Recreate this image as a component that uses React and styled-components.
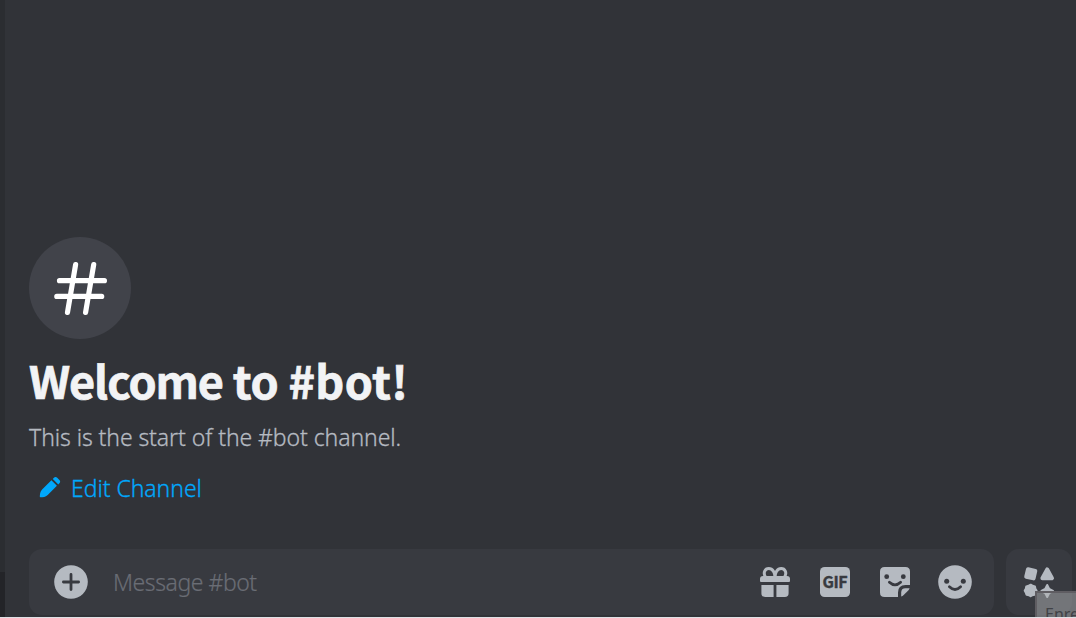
import React from "react";
import styled, { createGlobalStyle } from "styled-components";

const Global = createGlobalStyle`
  * { box-sizing: border-box; }
  html, body { margin: 0; padding: 0; background: #313338; overflow: hidden; }
  body { font-family: "Noto Sans", "Open Sans", sans-serif; }
`;

const Screen = styled.div`
  position: relative;
  display: flex;
  width: 1076px;
  height: 618px;
  overflow: hidden;
  background: #313338;
  border-bottom: 1px solid #dfe0e5;
`;

const Rail = styled.div`
  display: flex;
  flex: 0 0 5px;
  flex-direction: column;
  background: #2b2d31;
`;

const RailFooter = styled.div`
  margin-top: auto;
  height: 45px;
  background: #232428;
`;

const Chat = styled.main`
  display: flex;
  flex: 1;
  flex-direction: column;
  justify-content: flex-end;
  padding: 0 4px 2px 24px;
  min-width: 0;
`;

const Welcome = styled.section`
  display: flex;
  flex-direction: column;
  align-items: flex-start;
  margin-bottom: 45px;
`;

const ChannelIcon = styled.div`
  width: 102px;
  height: 102px;
  border-radius: 50%;
  background: #41434a;
  svg { display: block; }
`;

const Title = styled.h1`
  margin: 11px 0 0;
  font-family: "Noto Sans CJK JP", "Noto Sans", sans-serif;
  font-size: 45px;
  line-height: 60px;
  font-weight: 700;
  letter-spacing: -0.3px;
  -webkit-text-stroke: 0.7px #f2f3f5;
  white-space: nowrap;
  color: #f2f3f5;
`;

const Word = styled.span`
  letter-spacing: ${({ $tracking }) => $tracking}px;
`;

const Subtitle = styled.p`
  margin: 12px 0 0;
  font-size: 23px;
  line-height: 30px;
  font-weight: 300;
  letter-spacing: -0.08px;
  -webkit-text-stroke: 0.3px currentColor;
  white-space: nowrap;
  color: #b5bac1;
`;

const EditButton = styled.button`
  display: flex;
  align-items: center;
  margin: 18px 0 0;
  padding: 0 0 0 9px;
  height: 34px;
  border: 0;
  background: none;
  font: 300 23px/34px "Noto Sans", "Open Sans", sans-serif;
  letter-spacing: -0.05px;
  -webkit-text-stroke: 0.3px currentColor;
  color: #00a8fc;
  gap: 9px;
  white-space: nowrap;
`;

const EditLabel = styled.span`
  padding-top: 2px;
`;

const Composer = styled.div`
  display: flex;
  gap: 12px;
`;

const InputBar = styled.div`
  display: flex;
  align-items: center;
  width: 965px;
  height: 66px;
  padding: 0 21px 0 24px;
  border-radius: 13px;
  background: #383a40;
`;

const Placeholder = styled.span`
  flex: 1;
  margin: 0 0 1px 24px;
  font-size: 23px;
  line-height: 32px;
  font-weight: 300;
  letter-spacing: -0.45px;
  -webkit-text-stroke: 0.2px currentColor;
  color: #6a6d75;
`;

const Actions = styled.div`
  display: flex;
  gap: 24px;
`;

const Apps = styled.div`
  display: grid;
  place-items: center;
  width: 66px;
  height: 66px;
  border-radius: 13px;
  background: #383a40;
`;

const Glyph = styled.svg`
  display: block;
  flex: none;
  width: 36px;
  height: 36px;
  color: #b5bac1;
`;

const GifText = styled.text`
  font: 700 16px "Noto Sans CJK JP", "Noto Sans", sans-serif;
  fill: #383a40;
  stroke: #383a40;
  stroke-width: 0.4px;
`;

const Tooltip = styled.div`
  position: absolute;
  left: 1035px;
  top: 591px;
  width: 60px;
  height: 40px;
  padding: 11px 0 0 8px;
  border: 2px solid #5f5d62;
  background: rgba(174, 175, 178, 0.5);
  background-clip: padding-box;
  font: 400 16px/20px "Noto Sans", "Open Sans", sans-serif;
  color: #414247;
`;

const HashIcon = () => (
  <svg width="102" height="102" viewBox="0 0 102 102" fill="none" stroke="#fff" strokeWidth="5.2" strokeLinecap="round">
    <path d="M46.6 27.6 38.5 75.4M64.7 27.6 56.6 75.4M30.5 43.7H75.4M27.8 59.4H72.7" />
  </svg>
);

const PencilIcon = () => (
  <svg width="24" height="24" viewBox="0 0 24 24" fill="#00a8fc">
    <path d="M13.4 5.2 4.1 14.4C2 16.5 1.9 19.4 1.8 21.6c0 .5.2.7.7.7 2.2-.1 5.1-.2 7.2-2.3L18.9 10.8Z" />
    <path d="m14.8 3.9 1.1-1.1c1-1 2.3-1 3.3 0l2.2 2.2c1 1 1 2.3 0 3.3l-1.1 1.1Z" />
  </svg>
);

const PlusIcon = () => (
  <Glyph viewBox="0 0 36 36">
    <circle cx="18" cy="18" r="16.8" fill="currentColor" />
    <path d="M18 10.4V25.6M10.4 18H25.6" stroke="#383a40" strokeWidth="2.8" strokeLinecap="round" />
  </Glyph>
);

const GiftIcon = () => (
  <Glyph viewBox="0 0 36 36" fill="currentColor">
    <path d="M3 15q0-3 3-3H30q3 0 3 3v2.1q0 1-1 1H4q-1 0-1-1Z" />
    <path d="M4.4 21H16.6V33H8.2Q4.4 33 4.4 29.2ZM19.4 21H31.6v8.2q0 3.8-3.8 3.8H19.4Z" />
    <path d="M8.4 13C5.8 8.6 8 4.5 11.8 4.5c3.9 0 6.2 4.2 6.2 8.5 0-4.3 2.3-8.5 6.2-8.5 3.8 0 6 4.1 3.4 8.5" fill="none" stroke="currentColor" strokeWidth="3" />
  </Glyph>
);

const GifIcon = () => (
  <Glyph viewBox="0 0 36 36">
    <rect x="3" y="3" width="30" height="30" rx="4.6" fill="currentColor" />
    <GifText x="18" y="23.6" textAnchor="middle" textLength="25">GIF</GifText>
  </Glyph>
);

const StickerIcon = () => (
  <Glyph viewBox="0 0 36 36" fill="currentColor">
    <path d="M7.6 3H28.4Q33 3 33 7.6V21H28.5Q21 21 21 28.5V33H7.6Q3 33 3 28.4V7.6Q3 3 7.6 3Z" />
    <path d="M24.2 32.6V28.5Q24.2 24.2 28.5 24.2H32.6Q32 25.7 31 26.7L26.7 31Q25.6 32 24.2 32.6Z" />
    <circle cx="9.7" cy="12.7" r="2.4" fill="#383a40" />
    <circle cx="26.3" cy="12.7" r="2.4" fill="#383a40" />
    <path d="M12.4 18.3Q18 23.5 23.6 18.3" fill="none" stroke="#383a40" strokeWidth="2.8" strokeLinecap="round" />
  </Glyph>
);

const EmojiIcon = () => (
  <Glyph viewBox="0 0 36 36">
    <circle cx="18" cy="18" r="16.8" fill="currentColor" />
    <circle cx="9.7" cy="17.3" r="2.5" fill="#383a40" />
    <circle cx="26.3" cy="17.3" r="2.5" fill="#383a40" />
    <path d="M12.4 22.8Q18 28.2 23.6 22.8" fill="none" stroke="#383a40" strokeWidth="2.8" strokeLinecap="round" />
  </Glyph>
);

const AppsIcon = () => (
  <Glyph viewBox="0 0 36 36" fill="currentColor" stroke="currentColor" strokeWidth="4" strokeLinejoin="round">
    <path d="M7 5.2 14.3 6.9 12.6 14.4 5.2 12.7Z" />
    <path d="M26.2 5.4 31 14.2H21.4Z" />
    <path d="m9.7 20.9 1.9 1.1 2.2.6.4 2.2 1.2 1.9-1.2 1.8-.7 2.1-2.2.4-1.7 1-1.7-1-2.2-.4-.7-2.1-1.1-1.8 1.1-1.9.4-2.2 2.2-.6Z" strokeWidth="2.4" />
    <path d="M26.2 21 28.2 25 32 27 28.2 29 26.2 33 24.2 29 20.4 27 24.2 25Z" strokeWidth="2" />
  </Glyph>
);

export default function App() {
  return (
    <>
      <Global />
      <Screen>
        <Rail><RailFooter /></Rail>
        <Chat>
          <Welcome>
            <ChannelIcon><HashIcon /></ChannelIcon>
            <Title>
              <Word $tracking={-1.1}>Welcome</Word> <Word $tracking={-0.3}>to</Word> <Word $tracking={0.4}>#bot!</Word>
            </Title>
            <Subtitle>This is the start of the #bot channel.</Subtitle>
            <EditButton><PencilIcon /><EditLabel>Edit Channel</EditLabel></EditButton>
          </Welcome>
          <Composer>
            <InputBar>
              <PlusIcon />
              <Placeholder>Message #bot</Placeholder>
              <Actions>
                <GiftIcon />
                <GifIcon />
                <StickerIcon />
                <EmojiIcon />
              </Actions>
            </InputBar>
            <Apps><AppsIcon /></Apps>
          </Composer>
        </Chat>
        <Tooltip>Enre</Tooltip>
      </Screen>
    </>
  );
}
